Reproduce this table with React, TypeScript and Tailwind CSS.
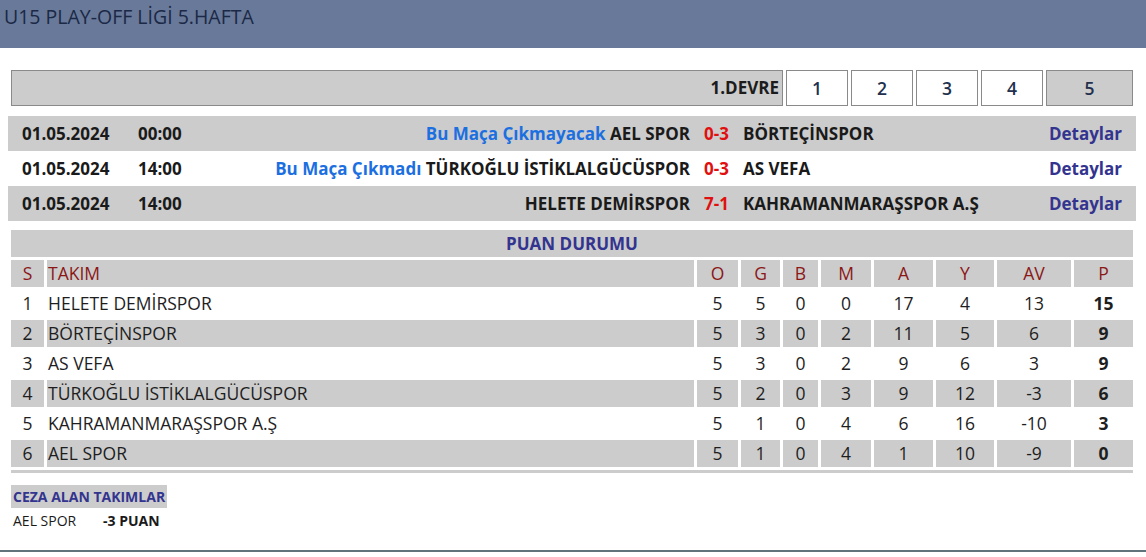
import React from "react";

type Match = {
  date: string;
  time: string;
  note?: string;
  home: string;
  score: string;
  away: string;
};

type Standing = {
  s: number;
  team: string;
  o: number;
  g: number;
  b: number;
  m: number;
  a: number;
  y: number;
  av: number;
  p: number;
};

const matches: Match[] = [
  { date: "01.05.2024", time: "00:00", note: "Bu Maça Çıkmayacak", home: "AEL SPOR", score: "0-3", away: "BÖRTEÇİNSPOR" },
  { date: "01.05.2024", time: "14:00", note: "Bu Maça Çıkmadı", home: "TÜRKOĞLU İSTİKLALGÜCÜSPOR", score: "0-3", away: "AS VEFA" },
  { date: "01.05.2024", time: "14:00", home: "HELETE DEMİRSPOR", score: "7-1", away: "KAHRAMANMARAŞSPOR A.Ş" },
];

const standings: Standing[] = [
  { s: 1, team: "HELETE DEMİRSPOR", o: 5, g: 5, b: 0, m: 0, a: 17, y: 4, av: 13, p: 15 },
  { s: 2, team: "BÖRTEÇİNSPOR", o: 5, g: 3, b: 0, m: 2, a: 11, y: 5, av: 6, p: 9 },
  { s: 3, team: "AS VEFA", o: 5, g: 3, b: 0, m: 2, a: 9, y: 6, av: 3, p: 9 },
  { s: 4, team: "TÜRKOĞLU İSTİKLALGÜCÜSPOR", o: 5, g: 2, b: 0, m: 3, a: 9, y: 12, av: -3, p: 6 },
  { s: 5, team: "KAHRAMANMARAŞSPOR A.Ş", o: 5, g: 1, b: 0, m: 4, a: 6, y: 16, av: -10, p: 3 },
  { s: 6, team: "AEL SPOR", o: 5, g: 1, b: 0, m: 4, a: 1, y: 10, av: -9, p: 0 },
];

const cols = "grid grid-cols-[33px_647px_41px_39px_35px_50px_59px_58px_74px_59px] gap-[3px]";
const heads = ["S", "TAKIM", "O", "G", "B", "M", "A", "Y", "AV", "P"];

function RoundBar() {
  const weeks = [1, 2, 3, 4, 5];
  return (
    <div className="mx-[3px] grid grid-cols-[1fr_62px_62px_62px_62px_87px] gap-[3px] h-[36px]">
      <div className="flex items-center justify-end pr-[3px] border border-[#8a8a8a] bg-[#cccccc] text-[17px] font-bold text-[#1c1c1c]">
        1.DEVRE
      </div>
      {weeks.map((w) => (
        <div
          key={w}
          className={
            "flex items-center justify-center border border-[#8a8a8a] text-[17.5px] font-semibold text-[#22304d] " +
            (w === 5 ? "bg-[#cccccc]" : "bg-white")
          }
        >
          {w}
        </div>
      ))}
    </div>
  );
}

function MatchRow({ m, shaded }: { m: Match; shaded: boolean }) {
  return (
    <div
      className={
        "grid grid-cols-[116px_552px_53px_1fr_auto] items-center h-[35px] px-[14px] text-[17px] font-bold text-[#1a1a1a] " +
        (shaded ? "bg-[#cccccc]" : "bg-white")
      }
    >
      <span>{m.date}</span>
      <div className="flex items-center justify-between">
        <span>{m.time}</span>
        <span className="whitespace-nowrap">
          {m.note ? <span className="text-[#1c6fe0]">{m.note} </span> : null}
          {m.home}
        </span>
      </div>
      <span className="text-center text-[#e01010]">{m.score}</span>
      <span className="whitespace-nowrap">{m.away}</span>
      <span className="text-[#33348f]">Detaylar</span>
    </div>
  );
}

function StandingsTable() {
  return (
    <div className="mx-[3px] mt-[9px] flex flex-col gap-[3px]">
      <div className="h-[27px] flex items-center justify-center bg-[#cccccc] text-[17px] font-bold text-[#33348f]">
        PUAN DURUMU
      </div>
      <div className={cols}>
        {heads.map((h, i) => (
          <div
            key={h}
            className={
              "h-[27px] flex items-center bg-[#cccccc] text-[17.5px] text-[#8b1717] " +
              (i === 1 ? "justify-start pl-[1px]" : "justify-center")
            }
          >
            {h}
          </div>
        ))}
      </div>
      {standings.map((r, idx) => {
        const bg = idx % 2 === 1 ? "bg-[#cccccc]" : "bg-white";
        const cell = "h-[27px] flex items-center justify-center " + bg;
        return (
          <div key={r.s} className={cols + " text-[17.5px] text-[#1e1e1e]"}>
            <div className={cell}>{r.s}</div>
            <div className={"h-[27px] flex items-center pl-[1px] " + bg}>{r.team}</div>
            <div className={cell}>{r.o}</div>
            <div className={cell}>{r.g}</div>
            <div className={cell}>{r.b}</div>
            <div className={cell}>{r.m}</div>
            <div className={cell}>{r.a}</div>
            <div className={cell}>{r.y}</div>
            <div className={cell}>{r.av}</div>
            <div className={cell + " font-bold"}>{r.p}</div>
          </div>
        );
      })}
      <div className="h-[3px] bg-[#cccccc]" />
    </div>
  );
}

export default function App() {
  return (
    <div
      className="h-[552px] w-[1146px] flex flex-col bg-white border-b-[2px] border-[#5f737b]"
      style={{ fontFamily: "'Open Sans', 'Liberation Sans', sans-serif" }}
    >
      <div className="h-[48px] shrink-0 bg-[#687999] pl-[4px] pt-[2px] text-[19.5px] text-[#1b2846]">
        U15 PLAY-OFF LİGİ 5.HAFTA
      </div>
      <div className="pl-[8px] pr-[10px] pt-[22px]">
        <RoundBar />
        <div className="mt-[10px]">
          {matches.map((m, i) => (
            <MatchRow key={i} m={m} shaded={i % 2 === 0} />
          ))}
        </div>
        <StandingsTable />
        <div className="mx-[3px] mt-[11px]">
          <div className="inline-flex items-center h-[23px] pl-[2px] pr-[2px] bg-[#cccccc] text-[14px] font-bold text-[#33348f]">
            CEZA ALAN TAKIMLAR
          </div>
          <div className="flex items-center mt-[2px] pl-[2px] text-[14px] text-[#1a1a1a]">
            <span className="w-[90px]">AEL SPOR</span>
            <span className="font-bold">-3 PUAN</span>
          </div>
        </div>
      </div>
    </div>
  );
}
